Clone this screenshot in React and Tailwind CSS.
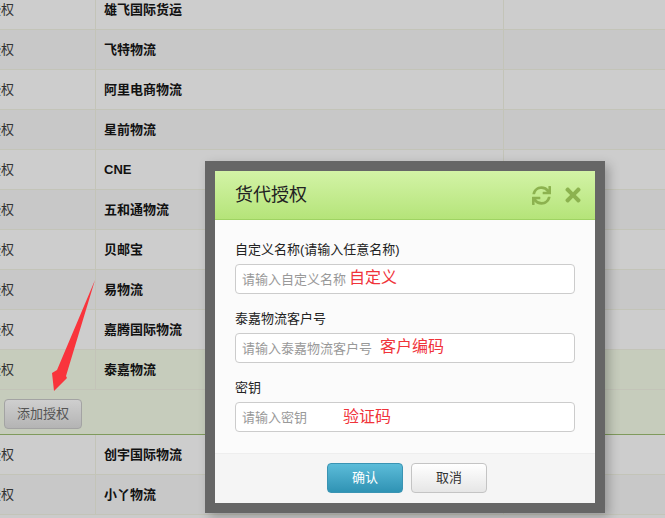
import { FaSync, FaTimes } from "react-icons/fa";

const font = "font-['Arial','Liberation_Sans','Noto_Sans_CJK_SC',sans-serif]";

const topRows = ["雄飞国际货运", "飞特物流", "阿里电商物流", "星前物流", "CNE", "五和通物流", "贝邮宝", "易物流", "嘉腾国际物流"];
const bottomRows = ["创宇国际物流", "小丫物流"];

function Row({ name, index, active }) {
  const bg = active ? "bg-[#c6ccbc]" : index % 2 ? "bg-[#c8c8c8]" : "bg-[#cdcdcd]";
  return (
    <div className={`flex h-10 border-b border-[#c3c4b8] ${bg}`}>
      <div className="w-[96px] shrink-0 border-r border-[#c3c4b8] overflow-hidden relative">
        <span className="absolute left-[-12px] top-[11px] text-[13px] leading-[18px] text-[#333]">授权</span>
      </div>
      <div className="w-[408px] shrink-0 border-r border-[#c3c4b8] pl-2 pt-[11px] text-[13px] leading-[18px] font-bold text-[#111]">
        {name}
      </div>
    </div>
  );
}

function Field({ label, placeholder, note, noteClass }) {
  return (
    <div className="mb-[16px]">
      <div className="text-[13px] leading-[18px] text-[#222] mb-[5px]">{label}</div>
      <div className="relative">
        <input
          readOnly
          placeholder={placeholder}
          className="w-full h-[30px] rounded-[4px] border border-[#ccc] bg-white px-[6px] text-[13px] placeholder:text-[#999] outline-none"
        />
        <span className={`absolute top-[3px] text-[16px] leading-[22px] text-[#f0333a] ${noteClass}`}>{note}</span>
      </div>
    </div>
  );
}

export default function App() {
  return (
    <div className={`relative w-[665px] h-[518px] overflow-hidden bg-[#cbcbcb] ${font}`}>
      <div className="-mt-[10px]">
        {topRows.map((name, i) => (
          <Row key={name} name={name} index={i} />
        ))}
        <Row name="泰嘉物流" index={9} active />
        <div className="h-[45px] bg-[#c6ccbc] border-b border-[#7f9a5c] pl-1 pt-[9px]">
          <button className="w-[78px] h-[30px] rounded-[4px] border border-[#a3a3a3] bg-gradient-to-b from-[#cfcfcf] to-[#b4b4b4] text-[13px] text-[#555]">
            添加授权
          </button>
        </div>
        {bottomRows.map((name, i) => (
          <Row key={name} name={name} index={i} />
        ))}
      </div>

      {/* annotation arrow */}
      <svg className="absolute left-0 top-0" width="120" height="420" viewBox="0 0 120 420">
        <polygon points="95,280 66,376 67,378 54,391 52,373 57,370" fill="#f9343c" />
      </svg>

      {/* modal */}
      <div className="absolute left-[205px] top-[161px] w-[400px] h-[352px] border-[10px] border-[#666] shadow-[4px_4px_10px_rgba(0,0,0,0.25)] flex flex-col">
        <div className="h-[49px] shrink-0 flex items-center justify-between pl-[20px] pr-[11px] bg-gradient-to-b from-[#d3f3a6] to-[#b5e479] border-b border-[#9fd363]">
          <span className="text-[18px] leading-6 text-[#222]">货代授权</span>
          <div className="flex items-center gap-[11px] text-[#8cb24f]">
            <FaSync size={19} />
            <FaTimes size={22} />
          </div>
        </div>
        <div className="h-[233px] shrink-0 bg-[#fbfbfb] px-[20px] pt-[21px]">
          <Field label="自定义名称(请输入任意名称)" placeholder="请输入自定义名称" note="自定义" noteClass="left-[114px]" />
          <Field label="泰嘉物流客户号" placeholder="请输入泰嘉物流客户号" note="客户编码" noteClass="left-[145px]" />
          <Field label="密钥" placeholder="请输入密钥" note="验证码" noteClass="left-[108px] top-[4px]" />
        </div>
        <div className="flex-1 bg-[#f5f5f5] border-t border-[#eee] flex justify-center gap-2 pt-[9px] pl-[4px]">
          <button className="w-[76px] h-[30px] rounded-[4px] border border-[#3a94b3] bg-gradient-to-b from-[#5bbcd9] to-[#2f93b4] text-[13px] text-white">
            确认
          </button>
          <button className="w-[76px] h-[30px] rounded-[4px] border border-[#c4c4c4] bg-gradient-to-b from-[#ffffff] to-[#e6e6e6] text-[13px] text-[#333]">
            取消
          </button>
        </div>
      </div>
    </div>
  );
}
